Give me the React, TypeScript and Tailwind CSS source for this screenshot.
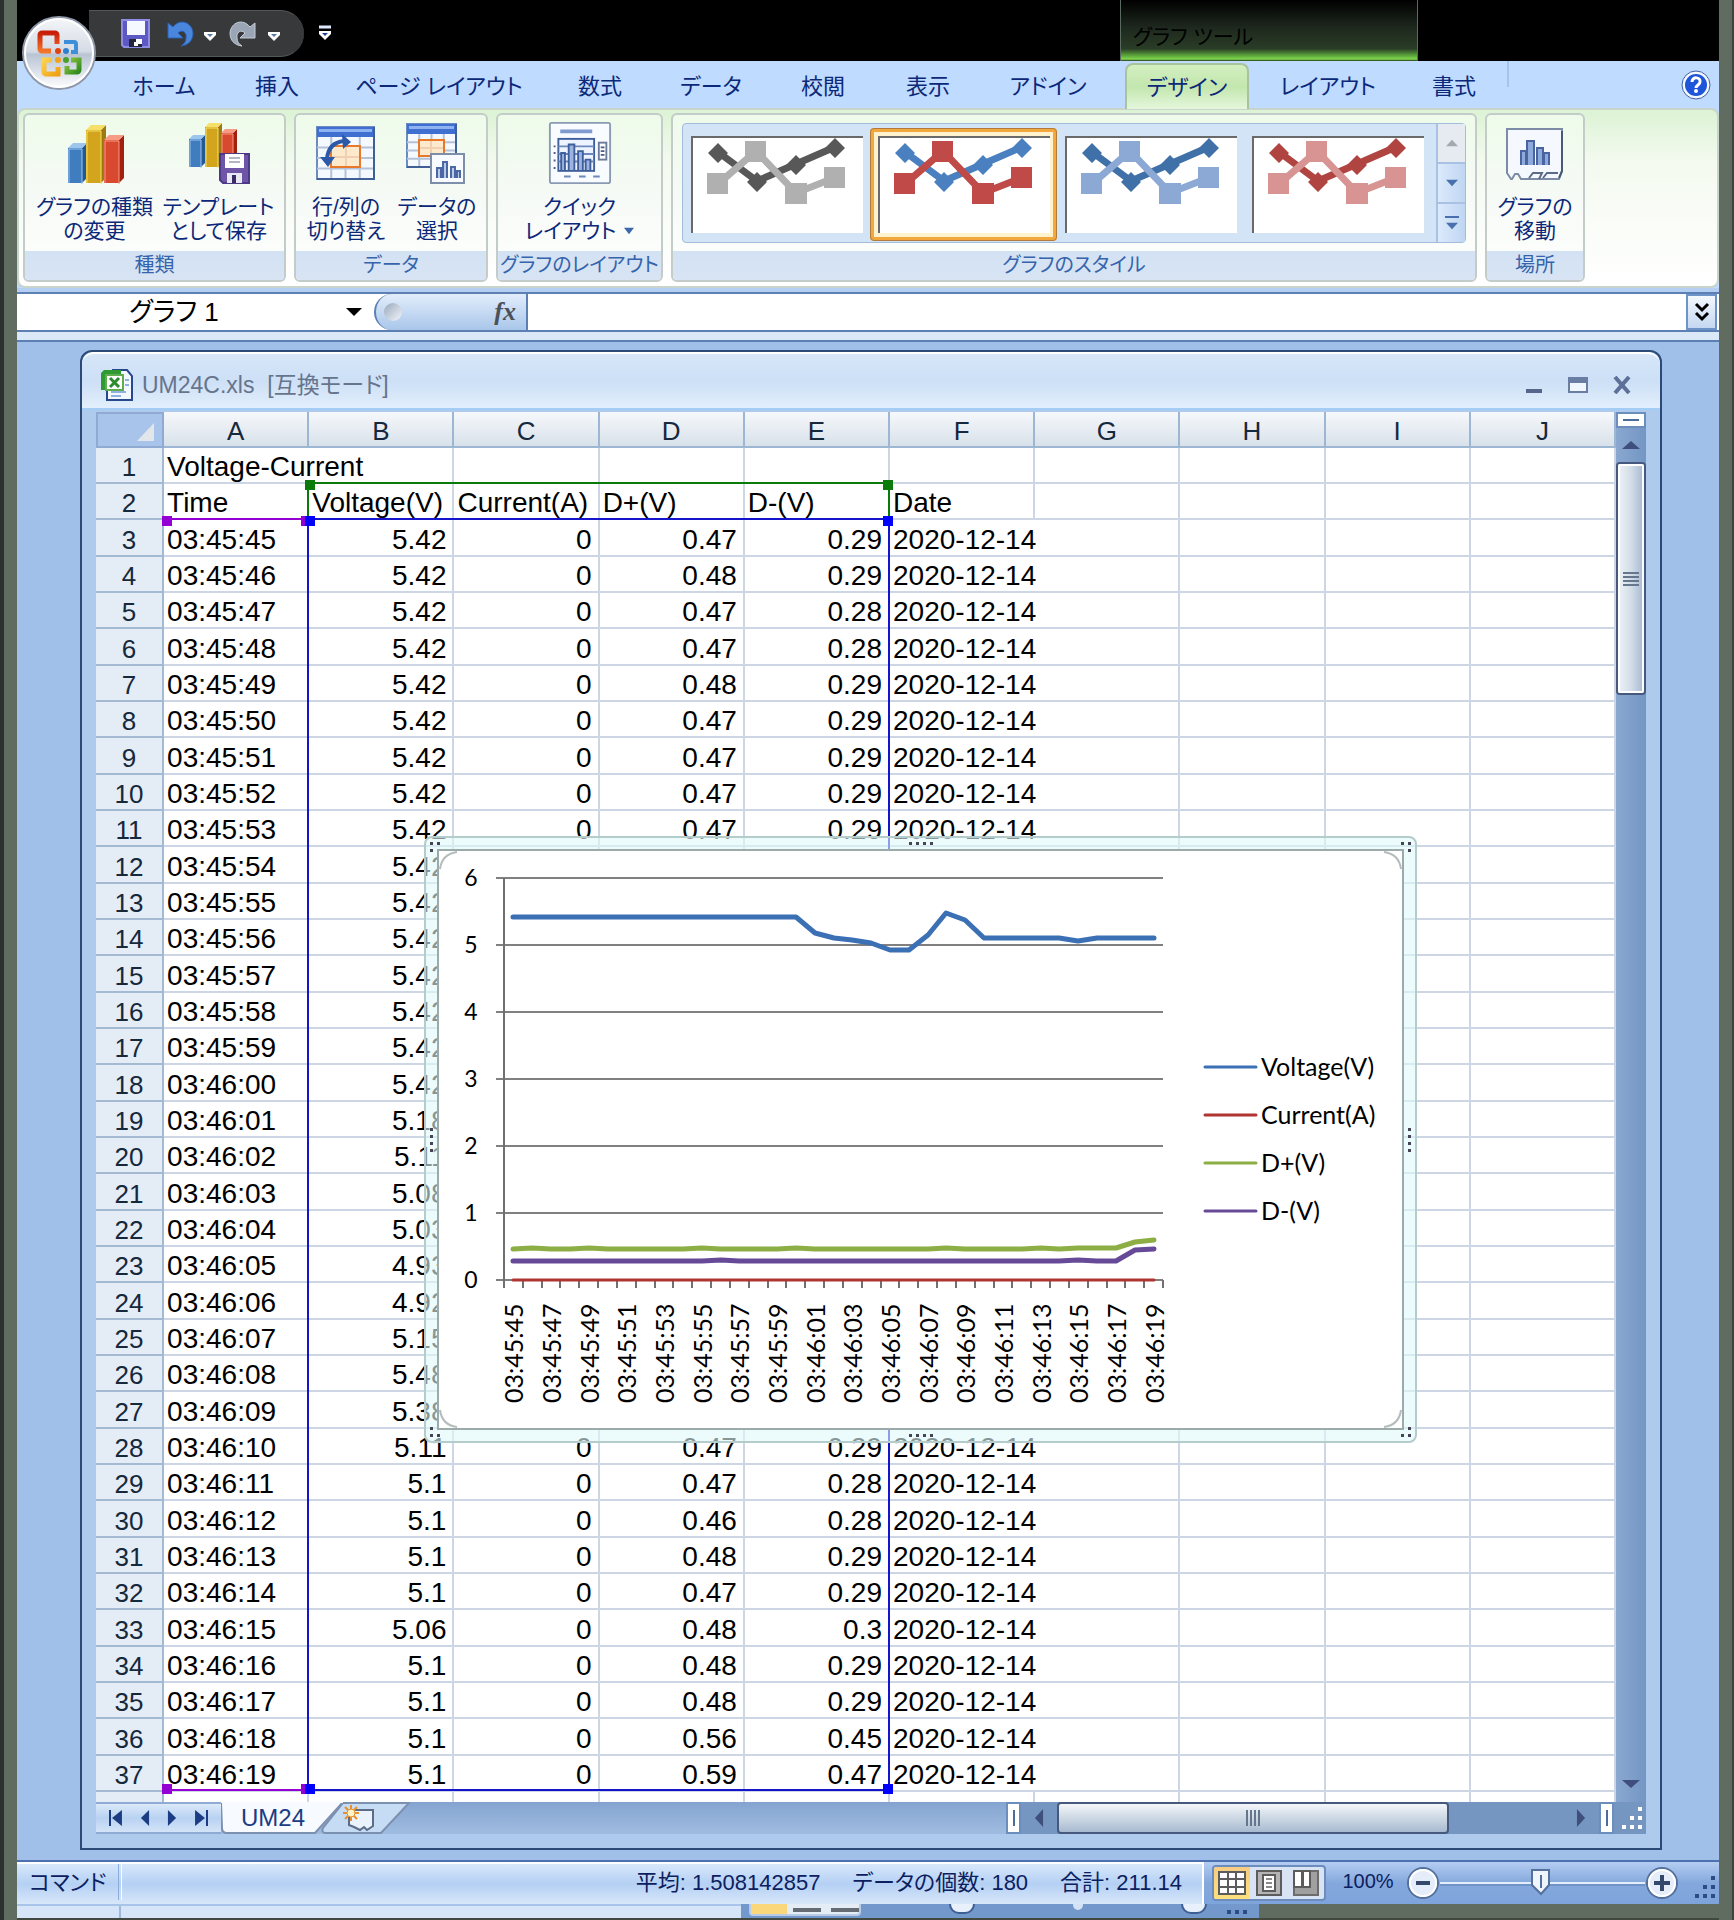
import React from "react";

const times: string[] = Array.from({ length: 35 }, (_, i) => {
  const s = 45 + i;
  const min = 45 + Math.floor(s / 60);
  return `03:${min}:${String(s % 60).padStart(2, "0")}`;
});

const voltage = [
  5.42, 5.42, 5.42, 5.42, 5.42, 5.42, 5.42, 5.42, 5.42, 5.42, 5.42, 5.42, 5.42, 5.42, 5.42, 5.42,
  5.18, 5.11, 5.08, 5.03, 4.93, 4.92, 5.15, 5.48, 5.38, 5.11, 5.1, 5.1, 5.1, 5.1, 5.06, 5.1, 5.1, 5.1, 5.1,
];
const dPlus = [
  0.47, 0.48, 0.47, 0.47, 0.48, 0.47, 0.47, 0.47, 0.47, 0.47, 0.48, 0.47, 0.47, 0.47, 0.47, 0.48,
  0.47, 0.47, 0.47, 0.47, 0.47, 0.47, 0.47, 0.48, 0.47, 0.47, 0.47, 0.46, 0.48, 0.47, 0.48, 0.48, 0.48, 0.56, 0.59,
];
const dMinus = [
  0.29, 0.29, 0.28, 0.28, 0.29, 0.29, 0.29, 0.29, 0.29, 0.29, 0.29, 0.3, 0.29, 0.29, 0.29, 0.29,
  0.29, 0.29, 0.29, 0.29, 0.29, 0.29, 0.29, 0.29, 0.29, 0.29, 0.28, 0.28, 0.29, 0.29, 0.3, 0.29, 0.29, 0.45, 0.47,
];
const current = times.map(() => 0);

const rows: string[][] = [
  ["Voltage-Current", "", "", "", "", ""],
  ["Time", "Voltage(V)", "Current(A)", "D+(V)", "D-(V)", "Date"],
  ...times.map((t, i) => [t, String(voltage[i]), "0", String(dPlus[i]), String(dMinus[i]), "2020-12-14"]),
];
const columns = ["A", "B", "C", "D", "E", "F", "G", "H", "I", "J"];

/* ---------- icons ---------- */

function OfficeLogo() {
  return (
    <svg viewBox="0 0 76 76" className="h-[76px] w-[76px]" aria-hidden="true">
      <defs>
        <linearGradient id="orb" x1="0" y1="0" x2="0" y2="1">
          <stop offset="0" stopColor="#f4f6f9" />
          <stop offset="0.48" stopColor="#d5dbe5" />
          <stop offset="0.52" stopColor="#b9c4d4" />
          <stop offset="1" stopColor="#ffffff" />
        </linearGradient>
        <linearGradient id="lr" x1="0" y1="0" x2="0" y2="1"><stop offset="0" stopColor="#c81e08" /><stop offset="1" stopColor="#f4742a" /></linearGradient>
        <linearGradient id="ly" x1="0" y1="0" x2="1" y2="1"><stop offset="0" stopColor="#fbd24a" /><stop offset="1" stopColor="#f0a013" /></linearGradient>
        <linearGradient id="lg" x1="0" y1="0" x2="1" y2="1"><stop offset="0" stopColor="#8cc63e" /><stop offset="1" stopColor="#2f8a1d" /></linearGradient>
      </defs>
      <circle cx="38" cy="38" r="36" fill="url(#orb)" stroke="#8f98a8" strokeWidth="2" />
      <circle cx="38" cy="38" r="34" fill="none" stroke="#fff" strokeWidth="2" />
      <path d="M36 29V20a2 2 0 0 0-2-2H21a2 2 0 0 0-2 2v14a2 2 0 0 0 2 2h9" fill="none" stroke="url(#lr)" strokeWidth="5" />
      <path d="M43 27h10a2 2 0 0 1 2 2v8h-5" fill="none" stroke="#3d8fd8" strokeWidth="4" />
      <path d="M31 45h-8v12a2 2 0 0 0 2 2h12v-7" fill="none" stroke="url(#ly)" strokeWidth="5" />
      <path d="M50 45h8v10a2 2 0 0 1-2 2H46v-6" fill="none" stroke="url(#lg)" strokeWidth="5" />
      <circle cx="37" cy="36" r="3" fill="#e2420f" />
      <circle cx="45" cy="36" r="3" fill="#2f7fd0" />
      <circle cx="37" cy="45" r="3" fill="#f2a417" />
      <circle cx="45" cy="45" r="3" fill="#4aa02c" />
    </svg>
  );
}

function SaveIcon() {
  return (
    <svg viewBox="0 0 30 30" className="h-[30px] w-[30px]" aria-hidden="true">
      <path d="M1 1h27v27H3l-2-2z" fill="#5c58c4" stroke="#8f8ce6" strokeWidth="2" />
      <rect x="6" y="2" width="18" height="14" fill="#f6f8ff" />
      <rect x="8" y="20" width="13" height="8" fill="#26263a" />
      <path d="M15 20h6v5h-4v2h-4v-4h2z" fill="#fff" />
    </svg>
  );
}

function UndoIcon({ redo = false }: { redo?: boolean }) {
  const d = redo
    ? "M26 3v15H11l5-5C12 9 7 12 8 18c0 4 2 6 5 8C5 25 1 20 1 13 2 2 14-2 21 7z"
    : "M1 3v15h15l-5-5c4-4 9-1 8 5 0 4-2 6-5 8 8-1 12-6 12-13C25 2 13-2 6 7z";
  return (
    <svg viewBox="0 0 28 28" className="h-7 w-7" aria-hidden="true">
      <path d={d} fill={redo ? "#9aa6b6" : "#4a86dc"} stroke={redo ? "#c6ced8" : "#2a62b8"} strokeWidth="1" />
    </svg>
  );
}

function WhiteCaret({ bar = false }: { bar?: boolean }) {
  return (
    <svg viewBox="0 0 14 16" className="h-4 w-3.5" aria-hidden="true">
      {bar && <path d="M1 2h12" stroke="#dfe8ff" strokeWidth="3" />}
      <path d="M1 6h12v3l-6 6-6-6z" fill="#fff" />
      <path d="M4 8h6l-3 3z" fill={bar ? "#1e3f9c" : "#5878a8"} />
    </svg>
  );
}

function Bar3D({ x, y, w, h, c }: { x: number; y: number; w: number; h: number; c: [string, string, string] }) {
  const d = Math.round(w / 3);
  return (
    <g>
      <path d={`M${x + w} ${y}l${d} -${d}v${h}l-${d} ${d}z`} fill={c[2]} />
      <path d={`M${x} ${y}l${d} -${d}h${w}l-${d} ${d}z`} fill={c[1]} />
      <rect x={x} y={y} width={w} height={h} fill={c[0]} />
      <path d={`M${x + 1} ${y + h}V${y + 1}h${w - 1}v${h}`} fill="none" stroke={c[1]} strokeWidth="1" />
    </g>
  );
}
const blueBar: [string, string, string] = ["#3f7dbf", "#9cc6ee", "#235a96"];
const goldBar: [string, string, string] = ["#d2a51c", "#f6e06a", "#a07a10"];
const redBar: [string, string, string] = ["#d9492f", "#f79b84", "#a3200f"];

function ChartTypeIcon() {
  return (
    <svg viewBox="0 0 64 64" className="h-16 w-16" aria-hidden="true">
      <Bar3D x={5} y={27} w={14} h={35} c={blueBar} />
      <Bar3D x={23} y={9} w={15} h={53} c={goldBar} />
      <Bar3D x={41} y={19} w={15} h={43} c={redBar} />
    </svg>
  );
}

function TemplateIcon() {
  return (
    <svg viewBox="0 0 64 64" className="h-16 w-16" aria-hidden="true">
      <Bar3D x={2} y={18} w={12} h={28} c={blueBar} />
      <Bar3D x={18} y={6} w={13} h={40} c={goldBar} />
      <Bar3D x={34} y={12} w={12} h={34} c={redBar} />
      <path d="M33 33h29v29H36l-3-3z" fill="#6f55a8" stroke="#4c3a86" strokeWidth="2" />
      <rect x="38" y="33" width="19" height="14" fill="#fff" />
      <path d="M42 37h11M42 41h11" stroke="#b4b4c4" strokeWidth="2" />
      <rect x="40" y="52" width="15" height="10" fill="#e9e9f2" />
      <rect x="45" y="54" width="4" height="8" fill="#3b2c68" />
    </svg>
  );
}

function SheetGrid({ x, y, w, h }: { x: number; y: number; w: number; h: number }) {
  const cw = w / 4;
  const rh = (h - 10) / 4;
  return (
    <g>
      <rect x={x} y={y} width={w} height={h} fill="#f4f9ff" stroke="#6c8cc0" strokeWidth="2" />
      <rect x={x} y={y} width={w} height="10" fill="#3f6fd0" />
      <rect x={x + 2} y={y + 2} width={w - 4} height="3" fill="#8fb2f0" />
      {[1, 2, 3].map((i) => (
        <path key={i} d={`M${x + cw * i} ${y + 10}v${h - 10}M${x} ${y + 10 + rh * i}h${w}`} stroke="#b4c2d8" strokeWidth="2" />
      ))}
      <path d={`M${x + w} ${y}v${h}h-${w}`} fill="none" stroke="#3f5f96" strokeWidth="2" />
    </g>
  );
}

function SwapIcon() {
  return (
    <svg viewBox="0 0 64 64" className="h-16 w-16" aria-hidden="true">
      <SheetGrid x={3} y={6} w={57} h={52} />
      <rect x="17" y="25" width="29" height="21" fill="#fdeacc" stroke="#e8792a" strokeWidth="2" />
      <path d="M32 26v19M18 36h27" stroke="#f0d0b0" strokeWidth="2" />
      <path d="M13 38C14 27 20 21 30 20" fill="none" stroke="#2c5aa8" strokeWidth="4" />
      <path d="M28 13l9 8-8 7zM6 36h15l-7 10z" fill="#2c5aa8" />
    </svg>
  );
}

function SelectDataIcon() {
  return (
    <svg viewBox="0 0 64 64" className="h-16 w-16" aria-hidden="true">
      <SheetGrid x={2} y={3} w={49} h={43} />
      <rect x="14" y="19" width="25" height="16" fill="#fdeacc" stroke="#e8792a" strokeWidth="2" />
      <path d="M26 20v14M15 27h23" stroke="#f0d0b0" strokeWidth="2" />
      <rect x="26" y="33" width="33" height="29" fill="#f7fbff" stroke="#7c8ea8" strokeWidth="2" />
      <path d="M32 57V47h4v10M38 57V41h4v16M46 57V46h4v11M52 57v-7h3v7" fill="#b9cbe8" stroke="#4a68a4" strokeWidth="2" />
    </svg>
  );
}

function QuickLayoutIcon() {
  return (
    <svg viewBox="0 0 68 68" className="h-16 w-16" aria-hidden="true">
      <rect x="2" y="2" width="64" height="64" rx="2" fill="#f8fbff" stroke="#8a9ab4" strokeWidth="2" />
      <path d="M13 11h34" stroke="#7f9bd0" strokeWidth="4" />
      <rect x="11" y="19" width="38" height="34" fill="#eef4ff" stroke="#3f5f9c" strokeWidth="2" />
      <path d="M11 27h38M11 35h38M11 43h38" stroke="#6c88bc" strokeWidth="2" />
      <path d="M14 52V34h4v18M22 52V25h6v27M32 52V32h5v20M40 52V41h5v11" fill="#9db4e0" stroke="#3f5f9c" strokeWidth="2" />
      <rect x="54" y="23" width="8" height="18" fill="#fff" stroke="#6c7c98" strokeWidth="2" />
      <path d="M56 28h4M56 32h4M56 36h4" stroke="#4a5f88" strokeWidth="2" />
      <path d="M7 26v2M7 33v2M7 41v2M7 49v2" stroke="#4a5f88" strokeWidth="2" />
      <path d="M17 59h7M33 59h7M48 59h7" stroke="#6c88bc" strokeWidth="2" />
    </svg>
  );
}

function MoveChartIcon() {
  return (
    <svg viewBox="0 0 64 64" className="h-16 w-16" aria-hidden="true">
      <path d="M4 8h55v42l-3 8H18l-3-5h-3l-3 5H8l-4-6z" fill="#f5f9ff" stroke="#7c8ca6" strokeWidth="2" />
      <path d="M26 57l4-5h9l-3 6M40 57l4-5h11" fill="none" stroke="#5c6c88" strokeWidth="2" />
      <path d="M59 10v40l-3 7" fill="none" stroke="#4a5a76" strokeWidth="2" />
      <path d="M18 44V30h5v14M24 44V20h7v24M34 44V27h6v17M41 44V32h5v12" fill="#8ea9dc" stroke="#4a64a0" strokeWidth="2" />
    </svg>
  );
}

function StyleThumb({ a, b }: { a: string; b: string }) {
  return (
    <svg viewBox="2 3 170 95" className="h-[97px] w-[172px] border-t-2 border-l-2 border-[#6a6a6a] bg-white" aria-hidden="true">
      <path d="M27 17L66 46L105 29L144 12" fill="none" stroke={a} strokeWidth="7" />
      <path d="M27 8l10 10-10 10-10-10zM66 37l10 10-10 10-10-10zM105 20l10 10-10 10-10-10zM144 3l10 10-10 10-10-10z" fill={a} />
      <path d="M27 49L65 16L105 58L143 43" fill="none" stroke={b} strokeWidth="7" />
      <path d="M16 38h21v21H16zM54 6h21v21H54zM94 48h22v21H94zM133 32h21v21h-21z" fill={b} />
    </svg>
  );
}

function ExcelIcon() {
  return (
    <svg viewBox="0 0 34 34" className="h-[34px] w-[34px]" aria-hidden="true">
      <path d="M12 2h15l5 6v24H7V20" fill="#f3f8ff" stroke="#26488c" strokeWidth="2" />
      <path d="M11 24h15M11 28h10M25 12h4M25 17h4" stroke="#8fb0e0" strokeWidth="2" />
      <path d="M4 2h17v6H7v14H1V5z" fill="#2f9a32" />
      <rect x="6" y="7" width="17" height="15" fill="#fff" stroke="#5fae4e" strokeWidth="2" />
      <path d="M10 10l9 9M19 10l-9 9" stroke="#2b8c2e" strokeWidth="3" />
    </svg>
  );
}

function Tri({ dir, cls, color = "#3f4f7c" }: { dir: "up" | "down" | "left" | "right"; cls: string; color?: string }) {
  const d = { up: "M0 10L6 1l6 9z", down: "M0 1h12L6 10z", left: "M10 0v12L1 6z", right: "M1 0v12l9-6z" }[dir];
  const vb = dir === "up" || dir === "down" ? "0 0 12 11" : "0 0 11 12";
  return (
    <svg viewBox={vb} className={cls} preserveAspectRatio="none" aria-hidden="true">
      <path d={d} fill={color} />
    </svg>
  );
}

/* ---------- title bar and ribbon ---------- */

function TitleBar() {
  return (
    <header className="relative flex h-[61px] bg-black">
      <button aria-label="Office ボタン" className="absolute top-[15px] left-1 z-10 rounded-full">
        <OfficeLogo />
      </button>
      <div className="mt-2.5 ml-[72px] flex h-[47px] w-[215px] items-center rounded-r-full border-y border-[#55585a] bg-[#37393b] pl-8">
        <button aria-label="上書き保存"><SaveIcon /></button>
        <button aria-label="元に戻す" className="ml-4"><UndoIcon /></button>
        <button aria-label="元に戻す履歴" className="ml-2"><WhiteCaret /></button>
        <button aria-label="やり直し" className="ml-3"><UndoIcon redo /></button>
        <button aria-label="やり直し履歴" className="ml-2.5"><WhiteCaret /></button>
      </div>
      <button aria-label="クイック アクセス ツール バーのユーザー設定" className="ml-3.5 self-center pt-1"><WhiteCaret bar /></button>
      <div className="absolute top-0 left-[1103px] flex h-[61px] w-[298px] items-center border-x border-[#5a6a60] bg-[linear-gradient(to_bottom,#000_0%,#1e281e_45%,#2a3d26_80%,#5fae3c_92%,#7fd84e_97%,#203018_100%)] pt-3 pl-3 text-[21px] text-black">
        グラフ ツール
      </div>
    </header>
  );
}

const tabs: { label: string; w: string }[] = [
  { label: "ホーム", w: "w-[114px]" },
  { label: "挿入", w: "w-[112px]" },
  { label: "ページ レイアウト", w: "w-[212px]" },
  { label: "数式", w: "w-[110px]" },
  { label: "データ", w: "w-[112px]" },
  { label: "校閲", w: "w-[112px]" },
  { label: "表示", w: "w-[98px]" },
  { label: "アドイン", w: "w-[142px]" },
  { label: "デザイン", w: "w-[136px]" },
  { label: "レイアウト", w: "w-[146px]" },
  { label: "書式", w: "w-[106px]" },
];

function TabBar() {
  return (
    <nav className="flex h-[47px] bg-[#bfdbff] pl-[90px] text-[22px] text-[#0c2878]">
      {tabs.map((t) =>
        t.label === "デザイン" ? (
          <button key={t.label} className={`${t.w} flex px-1.5 pt-0.5`}>
            <span className="h-[46px] flex-1 rounded-t-lg border-2 border-b-0 border-[#a9c49c] bg-linear-to-b from-[#d2efc0] via-[#c3e6ae] to-[#e4f7dc] pt-1.5 text-center">{t.label}</span>
          </button>
        ) : (
          <button key={t.label} className={`${t.w} pt-1`}>{t.label}</button>
        ),
      )}
      <span className="h-[26px] w-0.5 bg-[#a6c4e8]" />
      <button aria-label="ヘルプ" className="mr-2 ml-auto self-center">
        <svg viewBox="0 0 30 30" className="h-[30px] w-[30px]" aria-hidden="true">
          <circle cx="15" cy="15" r="14" fill="#f4f8ff" stroke="#3f60a8" strokeWidth="1" />
          <circle cx="15" cy="15" r="11" fill="#1f55d8" />
          <path d="M11 12c0-6 9-5 8 0 0 3-4 3-4 6" fill="none" stroke="#fff" strokeWidth="3" />
          <circle cx="15" cy="21" r="2" fill="#fff" />
        </svg>
      </button>
    </nav>
  );
}

function Group({ title, cls, children }: { title: string; cls: string; children: React.ReactNode }) {
  return (
    <section className={`${cls} flex shrink-0 flex-col overflow-hidden rounded-md border-2 border-[#c3ccc8] bg-linear-to-b from-[#eefbea] via-[#f6faf6] to-white`}>
      <div className="flex h-[137px] items-start justify-center">{children}</div>
      <h2 className="h-[29px] bg-linear-to-b from-[#d3e2f3] to-[#d8e4f4] text-center text-[20px] leading-[29px] font-normal whitespace-nowrap text-[#3563ac]">{title}</h2>
    </section>
  );
}

function BigButton({ icon, lines, cls, arrow = false }: { icon: React.ReactNode; lines: [string, string]; cls: string; arrow?: boolean }) {
  return (
    <button className={`${cls} flex shrink-0 flex-col items-center pt-1.5 text-[21px] leading-[24px] whitespace-nowrap text-[#0c2878]`}>
      {icon}
      <span className="mt-2.5">{lines[0]}</span>
      <span className="flex items-center gap-2">
        {lines[1]}
        {arrow && <Tri dir="down" cls="h-2 w-2.5" color="#3f68ac" />}
      </span>
    </button>
  );
}

const styles: { a: string; b: string; on?: boolean }[] = [
  { a: "#585858", b: "#b0b0b0" },
  { a: "#4a80c0", b: "#c04a48", on: true },
  { a: "#3f70a8", b: "#8ca8d4" },
  { a: "#b04440", b: "#d89492" },
];

function Ribbon() {
  return (
    <div className="flex h-[180px] gap-2 rounded-lg border-2 border-[#c8d4cc] bg-linear-to-b from-[#dcf3d4] via-[#f4faf0] via-30% to-white pt-[3px] pb-1 pl-1">
      <Group title="種類" cls="w-[263px]">
        <BigButton icon={<ChartTypeIcon />} lines={["グラフの種類", "の変更"]} cls="w-[128px]" />
        <BigButton icon={<TemplateIcon />} lines={["テンプレート", "として保存"]} cls="w-[120px]" />
      </Group>
      <Group title="データ" cls="w-[194px]">
        <BigButton icon={<SwapIcon />} lines={["行/列の", "切り替え"]} cls="w-[92px]" />
        <BigButton icon={<SelectDataIcon />} lines={["データの", "選択"]} cls="w-[90px]" />
      </Group>
      <Group title="グラフのレイアウト" cls="w-[167px]">
        <BigButton icon={<QuickLayoutIcon />} lines={["クイック", "レイアウト"]} cls="w-[140px]" arrow />
      </Group>
      <Group title="グラフのスタイル" cls="w-[806px]">
        <div className="mt-2 flex h-[120px] w-[784px] rounded-sm border border-[#a4bcdc] bg-[#d3e4f7]">
          {styles.map((s, i) => (
            <button
              key={i}
              aria-label={`スタイル ${i + 1}`}
              className={s.on ? "mt-1 flex h-[113px] w-[187px] items-center justify-center rounded-sm border-4 border-[#f2a83c] bg-[#fff3cf] outline-1 -outline-offset-1 outline-[#b07c3c]" : "mt-1 flex h-[113px] w-[187px] items-center justify-center"}
            >
              <StyleThumb a={s.a} b={s.b} />
            </button>
          ))}
          <div className="ml-auto flex w-[29px] flex-col divide-y-2 divide-[#a9c2e4] border-l-2 border-[#a9c2e4] bg-linear-to-r from-[#dceafb] to-[#bfd6f2]">
            <button aria-label="前の行" className="flex flex-1 items-center justify-center bg-[#e6ebf2]"><Tri dir="up" cls="h-2 w-3" color="#a4a8b0" /></button>
            <button aria-label="次の行" className="flex flex-1 items-center justify-center"><Tri dir="down" cls="h-2 w-3" color="#4870ac" /></button>
            <button aria-label="その他" className="flex flex-1 flex-col items-center justify-center gap-1"><span className="h-0.5 w-3.5 bg-[#4870ac]" /><Tri dir="down" cls="h-2 w-3" color="#4870ac" /></button>
          </div>
        </div>
      </Group>
      <Group title="場所" cls="w-[100px]">
        <BigButton icon={<MoveChartIcon />} lines={["グラフの", "移動"]} cls="w-[90px]" />
      </Group>
    </div>
  );
}

function FormulaBar() {
  return (
    <div className="bg-[#b4cff2] pt-1">
      <div className="flex h-10 border-y-2 border-[#5c80b4] bg-white">
        <input aria-label="名前ボックス" defaultValue="グラフ 1" className="w-[266px] bg-white pl-12 text-center text-[26px] text-black outline-none" />
        <button aria-label="名前の一覧" className="flex w-[91px] items-center justify-end pr-3"><Tri dir="down" cls="h-2.5 w-4" color="#000" /></button>
        <div className="flex w-[154px] items-center justify-between rounded-l-full border-r-2 border-l-2 border-[#5c80b4] bg-linear-to-b from-[#e2edfb] to-[#a9c6ea] pr-2.5 pl-2">
          <span className="h-[18px] w-[18px] rounded-full bg-linear-to-br from-[#9aa8bc] to-[#f4f7fb]" />
          <button className="font-['Liberation_Serif',serif] text-[26px] leading-none font-bold text-[#4c5058] italic">fx</button>
        </div>
        <input aria-label="数式バー" className="min-w-0 flex-1 bg-white px-2 outline-none" />
        <button aria-label="数式バーの展開" className="mr-0.5 flex w-[31px] items-center justify-center border-2 border-[#6c94c8] bg-linear-to-b from-[#f4f8fd] to-[#c4d8f2]">
          <svg viewBox="0 0 16 20" className="h-5 w-4" aria-hidden="true"><path d="M2 2l6 6 6-6M2 11l6 6 6-6" fill="none" stroke="#000" strokeWidth="3" /></svg>
        </button>
      </div>
      <div className="h-2 bg-[#dbe8f8]" />
      <div className="h-0.5 bg-[#5c80b4]" />
    </div>
  );
}

/* ---------- chart ---------- */

const PX = 65;
const PW = 659;
const PY0 = 429;
const UNIT = 67;
const line = (data: number[]) =>
  data.map((v, i) => `${Math.round(PX + (PW / 35) * (i + 0.5))},${Math.round(PY0 - v * UNIT)}`).join(" ");

const series = [
  { name: "Voltage(V)", color: "#3c70b4", data: voltage },
  { name: "Current(A)", color: "#b03430", data: current },
  { name: "D+(V)", color: "#8cae44", data: dPlus },
  { name: "D-(V)", color: "#664a98", data: dMinus },
];

function Dots({ cls }: { cls: string }) {
  return (
    <span className={`absolute flex gap-1 ${cls}`}>
      {[0, 1, 2, 3].map((i) => <i key={i} className="h-[3px] w-[3px] bg-[#445]" />)}
    </span>
  );
}

function CornerDots({ cls }: { cls: string }) {
  return (
    <span className={`absolute grid grid-cols-2 gap-1 ${cls}`}>
      {[0, 1, 2].map((i) => <i key={i} className="h-[3px] w-[3px] bg-[#445]" />)}
    </span>
  );
}

function Chart() {
  return (
    <div className="absolute top-[424px] left-[328px] rounded-lg border-2 border-[#b4cccc] bg-[#dff8f8]/60 p-[11px]">
      <CornerDots cls="top-1 left-1" />
      <CornerDots cls="top-1 right-1 -scale-x-100" />
      <CornerDots cls="bottom-1 left-1 -scale-y-100" />
      <CornerDots cls="right-1 bottom-1 rotate-180" />
      <Dots cls="top-1 left-1/2 -translate-x-1/2" />
      <Dots cls="bottom-1 left-1/2 -translate-x-1/2" />
      <Dots cls="top-1/2 left-1 -translate-y-1/2 flex-col" />
      <Dots cls="top-1/2 right-1 -translate-y-1/2 flex-col" />
      <div className="border-2 border-[#9caaaa] bg-white">
        <svg viewBox="0 0 963 577" className="block h-[577px] w-[963px] font-[Lato,sans-serif] text-[25px]" role="img" aria-label="電圧と電流の折れ線グラフ">
          <path d="M1 18Q3 3 18 1M945 1Q960 3 962 18M1 559Q3 574 18 576M945 576Q960 574 962 559" fill="none" stroke="#b4bcbc" strokeWidth="2" />
          {[0, 1, 2, 3, 4, 5, 6].map((n) => (
            <g key={n}>
              <path d={`M${PX - 8} ${PY0 - n * UNIT}H${PX + PW}`} stroke="#808080" strokeWidth="2" />
              <text x="32" y={PY0 + 8 - n * UNIT} textAnchor="middle" className="text-[23px]">{n}</text>
            </g>
          ))}
          <path d={`M${PX} ${PY0 - 6 * UNIT}V${PY0}`} stroke="#707070" strokeWidth="2" />
          {Array.from({ length: 36 }, (_, i) => (
            <path key={i} d={`M${Math.round(PX + (PW / 35) * i)} ${PY0}v8`} stroke="#707070" strokeWidth="2" />
          ))}
          {series.map((s) => (
            <polyline key={s.name} points={line(s.data)} fill="none" stroke={s.color} strokeWidth={s.name === "Current(A)" ? 3 : 5} strokeLinecap="round" strokeLinejoin="round" />
          ))}
          {times.map((t, i) => {
            if (i % 2) return null;
            const x = Math.round(PX + (PW / 35) * (i + 0.5)) + 10;
            return <text key={t} x={x} y={552} transform={`rotate(-90 ${x} 552)`}>{t}</text>;
          })}
          {series.map((s, i) => (
            <g key={s.name}>
              <path d={`M766 ${216 + i * 48}h51`} stroke={s.color} strokeWidth="3" strokeLinecap="round" />
              <text x="822" y={225 + i * 48}>{s.name}</text>
            </g>
          ))}
        </svg>
      </div>
    </div>
  );
}

/* ---------- workbook ---------- */

function Handle({ cls }: { cls: string }) {
  return <i className={`absolute h-2.5 w-2.5 ${cls}`} />;
}

function Grid() {
  return (
    <div className="relative min-w-0 flex-1 overflow-hidden bg-white">
      <table className="w-full table-fixed border-separate border-spacing-0 text-[28px] text-black">
        <colgroup>
          <col className="w-[68px]" />
          {columns.map((c) => <col key={c} className="w-[145px]" />)}
        </colgroup>
        <thead>
          <tr className="h-9 text-[26px] leading-[30px] text-[#16283c]">
            <th className="border-2 border-[#8fabd4] bg-[#a9c4ea] p-0 align-bottom">
              <svg viewBox="0 0 20 20" className="mr-1.5 mb-1 ml-auto h-5 w-5" aria-hidden="true"><path d="M18 1v18H1z" fill="#e2e6ea" /></svg>
            </th>
            {columns.map((c) => (
              <th key={c} scope="col" className="border-r-2 border-b-2 border-[#9cb6d4] bg-linear-to-b from-[#f6f8fb] to-[#d8e1ea] p-0 pt-1 font-normal">{c}</th>
            ))}
          </tr>
        </thead>
        <tbody>
          {rows.map((r, i) => (
            <tr key={i} className={i % 3 === 2 ? "h-[37px] leading-[30px]" : "h-9 leading-[30px]"}>
              <th scope="row" className="border-r-2 border-b-2 border-[#a4bad2] bg-[#e4ecf5] p-0 pt-1 text-[26px] font-normal text-[#16283c]">{i + 1}</th>
              {columns.map((c, k) => (
                <td
                  key={c}
                  className={
                    (i >= 2 && k > 0 && k < 5 ? "pr-1.5 text-right" : "pl-[3px] text-left") +
                    ((i === 0 && k === 0) || (i >= 2 && k === 5) ? " border-r-0" : " border-r-2") +
                    " border-b-2 border-[#ccd6e4] p-0 pt-1 whitespace-nowrap"
                  }
                >
                  {r[k] ?? ""}
                </td>
              ))}
            </tr>
          ))}
          <tr className="h-2.5">
            <th className="border-r-2 border-[#a4bad2] bg-[#e4ecf5] p-0" />
            {columns.map((c) => <td key={c} className="border-r-2 border-[#ccd6e4] p-0" />)}
          </tr>
        </tbody>
      </table>

      <div className="absolute top-[106px] left-[68px] h-0.5 w-[145px] bg-[#9400d3]" />
      <div className="absolute top-[1377px] left-[68px] h-0.5 w-[145px] bg-[#9400d3]" />
      <div className="absolute top-[70px] left-[211px] h-[38px] w-[583px] border-2 border-[#0a7a0a]" />
      <div className="absolute top-[106px] left-[211px] h-[1273px] w-[583px] border-2 border-[#1414cc]" />
      <Handle cls="top-[68px] left-[209px] bg-[#0a7a0a]" />
      <Handle cls="top-[68px] left-[787px] bg-[#0a7a0a]" />
      <Handle cls="top-[104px] left-[66px] bg-[#9400d3]" />
      <Handle cls="top-[104px] left-[205px] bg-[#9400d3]" />
      <Handle cls="top-[104px] left-[209px] bg-[#0000ff]" />
      <Handle cls="top-[104px] left-[787px] bg-[#0000ff]" />
      <Handle cls="top-[1372px] left-[66px] bg-[#9400d3]" />
      <Handle cls="top-[1372px] left-[205px] bg-[#9400d3]" />
      <Handle cls="top-[1372px] left-[209px] bg-[#0000ff]" />
      <Handle cls="top-[1372px] left-[787px] bg-[#0000ff]" />
      <Chart />
    </div>
  );
}

function VerticalScroll() {
  return (
    <div className="flex w-[30px] flex-col items-center bg-linear-to-r from-[#8aa8d0] to-[#7496c4]">
      <div className="flex h-4 w-full items-center justify-center border-2 border-[#6c8ebc] bg-white"><span className="h-0.5 w-4 bg-[#4c6c9c]" /></div>
      <button aria-label="上へ" className="flex h-[34px] w-full items-center justify-center"><Tri dir="up" cls="h-2.5 w-[18px]" /></button>
      <button aria-label="垂直スクロール" className="flex h-[233px] w-full flex-col items-center justify-center gap-0.5 rounded-sm border-2 border-[#46587c] bg-linear-to-r from-[#eef2f6] via-[#d3dde8] to-[#a4b8d0] outline-2 -outline-offset-4 outline-white">
        {[0, 1, 2, 3].map((i) => <span key={i} className="h-0.5 w-4 bg-[#66768c]" />)}
      </button>
      <button aria-label="下へ" className="mt-auto flex h-9 w-full items-center justify-center"><Tri dir="down" cls="h-2.5 w-[18px]" /></button>
    </div>
  );
}

function SplitBox() {
  return <span className="flex h-full w-[15px] items-center justify-center border-2 border-[#6c8ebc] bg-white"><span className="h-4 w-0.5 bg-[#4c6c9c]" /></span>;
}

function GripDots({ color }: { color: string }) {
  return (
    <svg viewBox="0 0 24 26" className="h-[26px] w-6" aria-hidden="true">
      <path d="M18 2h4v4h-4zM10 11h4v4h-4zM18 11h4v4h-4zM2 20h4v4H2zM10 20h4v4h-4zM18 20h4v4h-4z" fill={color} />
    </svg>
  );
}

function SheetBar() {
  return (
    <div className="flex h-8 bg-linear-to-b from-[#84a4d0] to-[#a0bce0]">
      <div className="flex w-[125px] items-center justify-around border-y-2 border-[#8fabd4] bg-linear-to-b from-[#dce9f9] via-[#b8d2f2] to-[#d4e4f8] px-1">
        <button aria-label="最初のシート" className="flex"><span className="h-4 w-0.5 bg-[#1c3c84]" /><Tri dir="left" cls="h-4 w-3" color="#1c3c84" /></button>
        <button aria-label="前のシート"><Tri dir="left" cls="h-4 w-2.5" color="#1c3c84" /></button>
        <button aria-label="次のシート"><Tri dir="right" cls="h-4 w-2.5" color="#1c3c84" /></button>
        <button aria-label="最後のシート" className="flex"><Tri dir="right" cls="h-4 w-3" color="#1c3c84" /><span className="h-4 w-0.5 bg-[#1c3c84]" /></button>
      </div>
      <button className="relative h-8 w-[120px] pr-4 text-center text-[24px] leading-8 text-[#1c3c84]">
        <svg viewBox="0 0 124 32" className="absolute top-0 left-0 h-8 w-[124px]" aria-hidden="true">
          <path d="M0 0h122L94 31H6Q1 31 1 26z" fill="#f7fafe" stroke="#7c90b0" strokeWidth="2" />
          <path d="M0 0h122" stroke="#f7fafe" strokeWidth="2" />
        </svg>
        <span className="relative">UM24</span>
      </button>
      <button aria-label="ワークシートの挿入" className="-ml-5">
        <svg viewBox="0 0 90 32" className="h-8 w-[90px]" aria-hidden="true">
          <path d="M22 1h66L60 31H4Q0 30 2 26z" fill="#c6dbf4" stroke="#7c90b0" strokeWidth="2" />
          <path d="M34 8h18v16l-6 4-3-3-4 3-6-3-5-2v-8" fill="#eaf2fc" stroke="#5c6c88" strokeWidth="2" />
          <path d="M30 3v16M22 11h16M24 5l12 12M36 5L24 17" stroke="#e8902c" strokeWidth="2" />
          <circle cx="30" cy="11" r="4" fill="#fff4c8" stroke="#e8902c" strokeWidth="1" />
        </svg>
      </button>
      <div className="ml-auto flex h-full items-center bg-[#7696c2]">
        <SplitBox />
        <button aria-label="左へ" className="flex w-9 justify-center"><Tri dir="left" cls="h-[18px] w-2.5" /></button>
        <button aria-label="水平スクロール" className="flex h-full w-[392px] items-center justify-center gap-0.5 rounded-sm border-2 border-[#46587c] bg-linear-to-b from-[#f4f6f9] via-[#ccd8e4] to-[#a8bad0]">
          {[0, 1, 2, 3].map((i) => <span key={i} className="h-4 w-0.5 bg-[#66768c]" />)}
        </button>
        <button aria-label="右へ" className="ml-[114px] flex w-9 justify-center"><Tri dir="right" cls="h-[18px] w-2.5" /></button>
        <SplitBox />
        <span className="ml-1.5 pr-0.5"><GripDots color="#fff" /></span>
      </div>
    </div>
  );
}

function Workbook() {
  return (
    <div className="bg-[#a0c0ea] pt-2 pr-[57px] pb-2.5 pl-[63px]">
      <div className="rounded-t-xl border-2 border-[#2c4a78] bg-[#aecbee]">
        <div className="flex h-[58px] items-center rounded-t-xl border-t-2 border-b-2 border-t-white border-b-[#a4cdf6] bg-linear-to-b from-[#d6e6f8] via-[#cde0f6] to-[#e2eefc] pt-2 pr-7 pl-[18px] text-[23px] text-[#66748c]">
          <ExcelIcon />
          <span className="ml-2 whitespace-pre">UM24C.xls  [互換モード]</span>
          <button aria-label="最小化" className="ml-auto flex h-4 w-4 items-end"><span className="h-1 w-full bg-[#56658a]" /></button>
          <button aria-label="最大化" className="ml-[26px] h-4 w-5 border-2 border-t-[6px] border-[#6a7ea4] bg-[#f0f6fd]" />
          <button aria-label="閉じる" className="ml-6">
            <svg viewBox="0 0 20 18" className="h-[18px] w-5" aria-hidden="true"><path d="M3 1l14 16M17 1L3 17" stroke="#5c7098" strokeWidth="4" /></svg>
          </button>
        </div>
        <div className="px-3.5 pt-0.5 pb-3.5">
          <div className="flex">
            <Grid />
            <VerticalScroll />
          </div>
          <SheetBar />
        </div>
      </div>
    </div>
  );
}

/* ---------- status bar ---------- */

function StatusBar() {
  return (
    <footer className="border-t-2 border-[#4c70b0]">
      <div className="flex h-[42px] items-center text-[22px] text-[#0c2060]">
        <div className="flex h-full flex-1 items-center border-t-2 border-white bg-linear-to-b from-[#d8e8fb] via-[#b4d0f4] to-[#d8e7f9] pb-1">
          <span className="w-[101px] pl-3">コマンド</span>
          <span className="h-full w-1 border-x border-l-[#8caedc] border-r-white" />
          <span className="ml-auto">平均: 1.508142857</span>
          <span className="ml-8">データの個数: 180</span>
          <span className="mr-5 ml-8">合計: 211.14</span>
        </div>
        <div className="flex h-full items-center border-l-2 border-white bg-linear-to-b from-[#b4cdf2] via-[#84a8dc] to-[#7ea4dc] pl-2">
          <div className="flex h-9 overflow-hidden rounded-sm border-2 border-[#6c8cbc] bg-[#d8e4f4]">
            <button aria-label="標準" className="flex w-9 items-center justify-center bg-linear-to-b from-[#f6cc84] to-[#ffe07c]">
              <svg viewBox="0 0 28 24" className="h-6 w-7" aria-hidden="true"><rect x="1" y="1" width="26" height="22" fill="#fff" stroke="#5c5c5c" strokeWidth="2" /><path d="M10 1v22M18 1v22M1 8h26M1 16h26" stroke="#5c5c5c" strokeWidth="2" /></svg>
            </button>
            <button aria-label="ページ レイアウト表示" className="flex w-[38px] items-center justify-center">
              <svg viewBox="0 0 26 26" className="h-[26px] w-[26px]" aria-hidden="true"><rect x="1" y="1" width="24" height="24" fill="#b4b4b4" stroke="#5c5c5c" strokeWidth="2" /><rect x="7" y="5" width="12" height="16" fill="#fff" stroke="#5c5c5c" strokeWidth="2" /><path d="M10 9h6M10 13h6M10 17h6" stroke="#8a8a8a" strokeWidth="2" /></svg>
            </button>
            <button aria-label="改ページ プレビュー" className="flex w-9 items-center justify-center">
              <svg viewBox="0 0 26 26" className="h-[26px] w-[26px]" aria-hidden="true"><rect x="1" y="1" width="24" height="24" fill="#a0a0a0" stroke="#6c6c6c" strokeWidth="2" /><path d="M1 1h8v16H1zM10 1h7v16h-7z" fill="#fff" stroke="#5c5c5c" strokeWidth="2" /></svg>
            </button>
          </div>
          <button className="ml-4 w-[52px] pb-1 text-[20px]">100%</button>
          <button aria-label="縮小" className="ml-3">
            <svg viewBox="0 0 34 34" className="h-[34px] w-[34px]" aria-hidden="true"><circle cx="17" cy="17" r="15" fill="#e4edf9" stroke="#54709c" strokeWidth="2" /><circle cx="17" cy="17" r="13" fill="none" stroke="#fff" strokeWidth="2" /><path d="M10 17h14" stroke="#34486c" strokeWidth="4" /></svg>
          </button>
          <div className="relative h-8 w-[205px]">
            <svg viewBox="0 0 205 32" className="h-8 w-[205px]" aria-hidden="true">
              <path d="M0 16h205" stroke="#e4eefb" strokeWidth="2" /><path d="M0 18h205" stroke="#5c80b8" strokeWidth="1" />
              <path d="M92 3h17v15l-8 9-9-9z" fill="#f0f5fc" stroke="#54709c" strokeWidth="2" /><path d="M101 8v13" stroke="#54709c" strokeWidth="2" />
            </svg>
            <input type="range" min="10" max="190" defaultValue="100" aria-label="ズーム" className="absolute inset-0 h-full w-full opacity-0" />
          </div>
          <button aria-label="拡大">
            <svg viewBox="0 0 34 34" className="h-[34px] w-[34px]" aria-hidden="true"><circle cx="17" cy="17" r="15" fill="#e4edf9" stroke="#54709c" strokeWidth="2" /><circle cx="17" cy="17" r="13" fill="none" stroke="#fff" strokeWidth="2" /><path d="M9 17h16M17 9v16" stroke="#34486c" strokeWidth="4" /></svg>
          </button>
          <span className="ml-3.5 pt-2 pr-0.5"><GripDots color="#2c4c88" /></span>
        </div>
      </div>
      <div className="flex h-4 border-b-2 border-[#404840]">
        <div className="w-[724px] border-t-2 border-[#a8c4e8] bg-[#d6e5f7] pl-[102px]"><span className="block h-full w-0.5 bg-[#9cb8dc]" /></div>
        <div className="flex w-[518px] bg-[#7298cc] pl-2">
          <div className="flex h-3 w-28 rounded-b-sm border-2 border-t-0 border-[#b8cce8] bg-[#e4ecf6]">
            <span className="w-9 bg-[#fbd77c]" />
            <span className="mt-1 ml-1.5 h-1 w-7 bg-[#666c74]" />
            <span className="mt-1 ml-2.5 h-1 w-7 bg-[#666c74]" />
          </div>
          <span className="ml-[88px] h-2.5 w-[26px] rounded-b-full border-2 border-t-0 border-[#3f5f94] bg-[#e8f0fb]" />
          <span className="ml-[98px] h-1.5 w-2.5 rounded-b-full bg-[#d4e2f5]" />
          <span className="ml-[98px] h-2.5 w-[26px] rounded-b-full border-2 border-t-0 border-[#3f5f94] bg-[#e8f0fb]" />
          <span className="mt-1.5 ml-5 flex gap-1">
            {[0, 1, 2].map((i) => <i key={i} className="h-1 w-1 bg-[#2c4c88]" />)}
          </span>
        </div>
      </div>
    </footer>
  );
}

export default function App() {
  return (
    <div className="flex bg-[#606c60] font-['Liberation_Sans','Noto_Sans_CJK_JP',sans-serif] [font-feature-settings:'palt']">
      <div className="w-[17px] border-l-4 border-[#2c302e]" />
      <main className="min-w-0 flex-1">
        <TitleBar />
        <TabBar />
        <div className="bg-[#bfdbff]"><Ribbon /></div>
        <FormulaBar />
        <Workbook />
        <StatusBar />
      </main>
      <div className="w-[15px] border-r-2 border-[#3c443e]" />
    </div>
  );
}
